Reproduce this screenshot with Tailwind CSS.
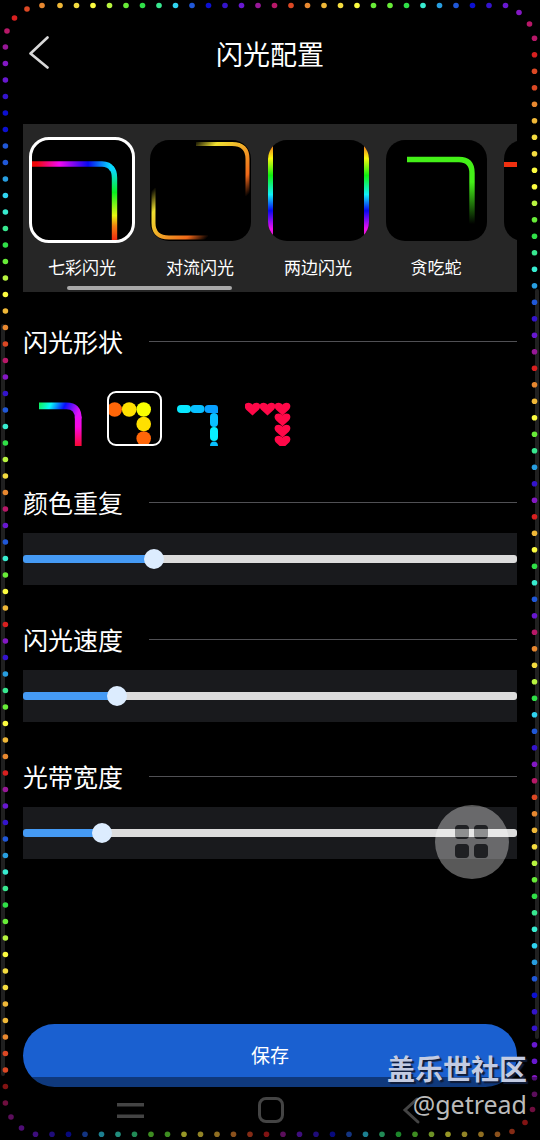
<!DOCTYPE html>
<html lang="zh-CN">
<head>
<meta charset="utf-8">
<meta name="viewport" content="width=device-width, initial-scale=1">
<title>闪光配置</title>
<script src="https://cdn.jsdelivr.net/npm/@tailwindcss/browser@4"></script>
</head>
<body class="bg-black text-white font-['Noto_Sans_CJK_SC',sans-serif]">
<div class="relative flex min-h-screen flex-col overflow-hidden">

  <header class="grid h-[108px] grid-cols-[1fr_auto_1fr] items-center px-6">
    <button type="button" aria-label="返回" class="flex h-10 w-8 items-center">
      <svg class="h-9 w-7" viewBox="0 0 28 36" fill="none" stroke="#d8d8d8" stroke-width="2.6" stroke-linecap="round" stroke-linejoin="round"><path d="M23.5 1.5 6.500 17.500 23.500 31.500"/></svg>
    </button>
    <h1 class="text-[27px] leading-10">闪光配置</h1>
  </header>

  <main class="flex flex-1 flex-col px-[23px] pt-4">
    <section aria-label="闪光模式" class="flex flex-col overflow-hidden bg-[#262626] pt-[13px]">
      <div class="flex">
        <button type="button" aria-pressed="true" class="flex w-[118px] shrink-0 flex-col items-center gap-2.5">
          <span class="flex h-[106px] items-center">
            <span class="block size-[106px] overflow-hidden rounded-[20px] border-[3px] border-white bg-black">
              <svg class="size-full" viewBox="0 0 100 100" fill="none">
                <defs>
                  <linearGradient id="r1" gradientUnits="userSpaceOnUse" x1="0" y1="0" x2="85" y2="0"><stop offset=".05" stop-color="#f00808"/><stop offset=".32" stop-color="#f408f0"/><stop offset=".66" stop-color="#0808f0"/><stop offset=".92" stop-color="#08d8ff"/></linearGradient>
                  <linearGradient id="r2" gradientUnits="userSpaceOnUse" x1="0" y1="30" x2="0" y2="100"><stop offset="0" stop-color="#08d8ff"/><stop offset=".32" stop-color="#08f020"/><stop offset=".65" stop-color="#e8f810"/><stop offset=".8" stop-color="#f08010"/><stop offset="1" stop-color="#f02810"/></linearGradient>
                </defs>
                <path d="M0 24H70Q77 24 80 29" stroke="url(#r1)" stroke-width="5.4"/>
                <path d="M79.4 28Q82.5 31 82.5 38V100" stroke="url(#r2)" stroke-width="5.4"/>
              </svg>
            </span>
          </span>
          <span class="text-[17px] leading-7">七彩闪光</span>
        </button>

        <button type="button" aria-pressed="false" class="flex w-[118px] shrink-0 flex-col items-center gap-2.5">
          <span class="flex h-[106px] items-center">
            <span class="block size-[101px] overflow-hidden rounded-[19px] bg-black">
              <svg class="size-full" viewBox="0 0 101 101" fill="none" stroke-width="4">
                <defs>
                  <linearGradient id="c1" gradientUnits="userSpaceOnUse" x1="46" y1="0" x2="98" y2="55"><stop offset="0" stop-color="#f0e030" stop-opacity="0"/><stop offset=".22" stop-color="#f0e030"/><stop offset=".5" stop-color="#f0a828"/><stop offset=".8" stop-color="#f06818"/><stop offset="1" stop-color="#f06018" stop-opacity="0"/></linearGradient>
                  <linearGradient id="c2" gradientUnits="userSpaceOnUse" x1="4" y1="48" x2="56" y2="99"><stop offset="0" stop-color="#f0e030" stop-opacity="0"/><stop offset=".22" stop-color="#f0e030"/><stop offset=".5" stop-color="#f0a828"/><stop offset=".8" stop-color="#f06818"/><stop offset="1" stop-color="#f06018" stop-opacity="0"/></linearGradient>
                </defs>
                <path d="M46 4H82Q97.500 4 97.500 19V56" stroke="url(#c1)"/>
                <path d="M3.500 48V83Q3.500 97.500 19 97.500H58" stroke="url(#c2)"/>
              </svg>
            </span>
          </span>
          <span class="text-[17px] leading-7">对流闪光</span>
        </button>

        <button type="button" aria-pressed="false" class="flex w-[118px] shrink-0 flex-col items-center gap-2.5">
          <span class="flex h-[106px] items-center">
            <span class="block size-[101px] overflow-hidden rounded-[19px] bg-black">
              <svg class="size-full" viewBox="0 0 101 101">
                <defs><linearGradient id="s1" x1="0" y1="0" x2="0" y2="1"><stop offset=".04" stop-color="#f06820"/><stop offset=".18" stop-color="#f8f810"/><stop offset=".35" stop-color="#10f010"/><stop offset=".54" stop-color="#10f0f8"/><stop offset=".7" stop-color="#0808f0"/><stop offset=".88" stop-color="#f010f0"/><stop offset="1" stop-color="#d020b0"/></linearGradient></defs>
                <path d="M0 0H5V101H0zM96 0H101V101H96z" fill="url(#s1)"/>
              </svg>
            </span>
          </span>
          <span class="text-[17px] leading-7">两边闪光</span>
        </button>

        <button type="button" aria-pressed="false" class="flex w-[118px] shrink-0 flex-col items-center gap-2.5">
          <span class="flex h-[106px] items-center">
            <span class="block size-[101px] overflow-hidden rounded-[19px] bg-black">
              <svg class="size-full" viewBox="0 0 101 101" fill="none">
                <defs><linearGradient id="n1" gradientUnits="userSpaceOnUse" x1="0" y1="42" x2="0" y2="84"><stop offset="0" stop-color="#44f018"/><stop offset="1" stop-color="#44f018" stop-opacity="0"/></linearGradient></defs>
                <path d="M21 19.500H73Q86 19.500 86 33V84" stroke="url(#n1)" stroke-width="5.400"/>
              </svg>
            </span>
          </span>
          <span class="text-[17px] leading-7">贪吃蛇</span>
        </button>

        <button type="button" aria-label="更多模式" class="flex w-[118px] shrink-0 flex-col items-center">
          <span class="flex h-[106px] items-center">
            <span class="block size-[101px] overflow-hidden rounded-[19px] bg-black">
              <svg class="size-full" viewBox="0 0 101 101"><path d="M0 22H80V27H0z" fill="#f03010"/></svg>
            </span>
          </span>
        </button>
      </div>
      <div class="mb-0.5 ml-11 mt-[5px] h-1 w-[165px] rounded-full bg-[#a9a9a9]"></div>
    </section>

    <section class="pt-[31px]">
      <div class="flex items-center gap-[26px]"><h2 class="text-[25px] leading-9">闪光形状</h2><div class="h-px flex-1 bg-[#505054]"></div></div>
      <div class="flex gap-3.5 pl-[15px] pt-8">
        <button type="button" aria-label="线条" aria-pressed="false" class="size-[55px]">
          <svg class="size-full" viewBox="0 0 54 54" fill="none" stroke-width="6.600">
            <defs>
              <linearGradient id="l1" gradientUnits="userSpaceOnUse" x1="1" y1="0" x2="41" y2="18"><stop offset="0" stop-color="#10f010"/><stop offset=".36" stop-color="#08f8f8"/><stop offset=".66" stop-color="#0810f8"/><stop offset="1" stop-color="#e010f8"/></linearGradient>
              <linearGradient id="l2" gradientUnits="userSpaceOnUse" x1="0" y1="22" x2="0" y2="55"><stop offset="0" stop-color="#e010f8"/><stop offset=".4" stop-color="#f808e0"/><stop offset="1" stop-color="#f80828"/></linearGradient>
            </defs>
            <path d="M1 14.500H28Q39.500 14.500 39.500 27" stroke="url(#l1)"/><path d="M39.500 25V55" stroke="url(#l2)"/>
          </svg>
        </button>
        <button type="button" aria-label="圆点" aria-pressed="true" class="size-[55px] overflow-hidden rounded-[9px] border-2 border-white">
          <svg class="size-full" viewBox="0 0 51 51"><g fill="#ff6608"><circle cx="5.700" cy="16.500" r="7.300"/><circle cx="34.700" cy="45.500" r="7.300"/></g><g fill="#ffe000"><circle cx="20.200" cy="16.500" r="7.300"/><circle cx="34.700" cy="31" r="7.300"/></g><circle cx="34.700" cy="16.500" r="7.300" fill="#f8ff00"/></svg>
        </button>
        <button type="button" aria-label="胶囊" aria-pressed="false" class="size-[55px]">
          <svg class="size-full" viewBox="0 0 55 55"><rect x="1" y="14" width="14" height="8" rx="4" fill="#08e8ff"/><rect x="14.500" y="14" width="14" height="8" rx="4" fill="#08c0ff"/><path d="M32.500 14H39Q42 14 42 17V22H32.500a4 4 0 0 1 0-8z" fill="#08a0ff"/><rect x="34" y="22" width="8" height="14" rx="4" fill="#08c0ff"/><rect x="34" y="36" width="8" height="14" rx="4" fill="#08f0ff"/><path d="M34 55Q34 50.500 38 50.500T42 55z" fill="#08c0ff"/></svg>
        </button>
        <button type="button" aria-label="爱心" aria-pressed="false" class="size-[55px]">
          <svg class="size-full" viewBox="0 0 55 55" fill="#ff0848">
            <defs><path id="heart" d="M7.500 12.800 1.200 7C-1.800 3.500-.2 0 3.500 0 5.500 0 7 1 7.500 2 8 1 9.500 0 11.500 0c3.700 0 5.300 3.500 2.300 7z"/></defs>
            <use href="#heart" x="0" y="11.700"/><use href="#heart" x="15" y="11.700"/><use href="#heart" x="30" y="11.700"/><use href="#heart" x="30" y="22.500"/><use href="#heart" x="30" y="33.700"/><use href="#heart" x="30" y="44.800"/>
          </svg>
        </button>
      </div>
    </section>

    <section class="pt-[38px]">
      <div class="flex items-center gap-[26px]"><h2 class="text-[25px] leading-9"><label for="repeat">颜色重复</label></h2><div class="h-px flex-1 bg-[#505054]"></div></div>
      <div class="mt-[13px] flex h-[52px] items-center bg-[#191a1d]">
        <input id="repeat" type="range" min="0" max="1000" value="255" style="background-image:linear-gradient(to right,#459af4 26.5%,#dcdcdc 26.5%)" class="h-2 w-full appearance-none rounded-[3px] [&::-webkit-slider-thumb]:size-5 [&::-webkit-slider-thumb]:appearance-none [&::-webkit-slider-thumb]:rounded-full [&::-webkit-slider-thumb]:bg-[#dcecfe]">
      </div>
    </section>

    <section class="pt-9">
      <div class="flex items-center gap-[26px]"><h2 class="text-[25px] leading-9"><label for="speed">闪光速度</label></h2><div class="h-px flex-1 bg-[#505054]"></div></div>
      <div class="mt-[13px] flex h-[52px] items-center bg-[#191a1d]">
        <input id="speed" type="range" min="0" max="1000" value="177" style="background-image:linear-gradient(to right,#459af4 19%,#dcdcdc 19%)" class="h-2 w-full appearance-none rounded-[3px] [&::-webkit-slider-thumb]:size-5 [&::-webkit-slider-thumb]:appearance-none [&::-webkit-slider-thumb]:rounded-full [&::-webkit-slider-thumb]:bg-[#dcecfe]">
      </div>
    </section>

    <section class="pt-9">
      <div class="flex items-center gap-[26px]"><h2 class="text-[25px] leading-9"><label for="band">光带宽度</label></h2><div class="h-px flex-1 bg-[#505054]"></div></div>
      <div class="mt-[13px] flex h-[52px] items-center bg-[#191a1d]">
        <input id="band" type="range" min="0" max="1000" value="146" style="background-image:linear-gradient(to right,#459af4 16%,#dcdcdc 16%)" class="h-2 w-full appearance-none rounded-[3px] [&::-webkit-slider-thumb]:size-5 [&::-webkit-slider-thumb]:appearance-none [&::-webkit-slider-thumb]:rounded-full [&::-webkit-slider-thumb]:bg-[#dcecfe]">
      </div>
    </section>

    <button type="button" class="mb-[53px] mt-auto h-[63px] rounded-full bg-[#1a60d0] text-[19px]">保存</button>
  </main>

  <!-- Light strip that runs round the screen edge, with the two edge handles -->
  <svg id="strip" aria-hidden="true" class="pointer-events-none absolute inset-0 size-full" viewBox="0 0 540 1140" preserveAspectRatio="none">
    <rect x="1" y="324" width="4" height="752" rx="2" fill="#202020"/>
    <rect x="535" y="289" width="4" height="750" rx="2" fill="#202020"/>
  </svg>

  <button type="button" aria-label="悬浮菜单" class="absolute right-[31px] top-[805px] size-[74px]">
    <svg class="size-full" viewBox="0 0 74 74"><path fill="#fff" fill-opacity=".35" fill-rule="evenodd" d="M37 0a37 37 0 1 1 0 74 37 37 0 1 1 0-74zM24 20a4 4 0 0 0-4 4v6a4 4 0 0 0 4 4h6a4 4 0 0 0 4-4v-6a4 4 0 0 0-4-4zM43 20a4 4 0 0 0-4 4v6a4 4 0 0 0 4 4h6a4 4 0 0 0 4-4v-6a4 4 0 0 0-4-4zM24 39a4 4 0 0 0-4 4v6a4 4 0 0 0 4 4h6a4 4 0 0 0 4-4v-6a4 4 0 0 0-4-4zM43 39a4 4 0 0 0-4 4v6a4 4 0 0 0 4 4h6a4 4 0 0 0 4-4v-6a4 4 0 0 0-4-4z"/><g fill="#282a2c" fill-opacity=".43"><rect x="20" y="20" width="14" height="14" rx="4"/><rect x="39" y="20" width="14" height="14" rx="4"/><rect x="20" y="39" width="14" height="14" rx="4"/><rect x="39" y="39" width="14" height="14" rx="4"/></g></svg>
  </button>

  <nav aria-label="系统导航" class="absolute inset-x-0 bottom-0 flex h-[63px] items-center justify-between bg-black/40 pl-[115px] pr-[113px]">
    <button type="button" aria-label="最近任务"><svg class="h-8 w-8" viewBox="0 0 32 32" fill="#444"><path d="M2 10h27v3.500H2zM2 21.500h27V25H2z"/></svg></button>
    <button type="button" aria-label="主屏幕"><svg class="h-8 w-8" viewBox="0 0 32 32" fill="none" stroke="#444" stroke-width="3"><rect x="4.500" y="5.500" width="23" height="23" rx="6.500"/></svg></button>
    <button type="button" aria-label="返回上一页"><svg class="h-8 w-8" viewBox="0 0 32 32" fill="none" stroke="#444" stroke-width="3" stroke-linecap="round"><path d="M22 6 10 17l13 12"/></svg></button>
  </nav>

  <div class="absolute bottom-[18px] right-[13px] flex flex-col items-end text-right">
    <p class="text-[28px] font-bold leading-9 text-[#c3cbe2] [text-shadow:2px_2px_1px_#101c38]">盖乐世社区</p>
    <p class="font-['Noto_Sans',sans-serif] text-[25px] leading-9 text-[#bbbbbb]">@getread</p>
  </div>
</div>

<script>
  // Each letter is the colour of one lamp in a run; runs are spaced evenly.
  const hue = { r:'#d82020', o:'#dc4824', O:'#e88830', g:'#f0b838', y:'#f4dc40', Y:'#fcfc40', l:'#b8f440', L:'#68ec38', G:'#30e048', t:'#38e890', c:'#38ecd0', C:'#30d4f0', a:'#289ee0', b:'#2058d8', B:'#0c10d0', i:'#3414cc', v:'#6818d0', p:'#8418c4', m:'#981898', M:'#b81868' };
  const strip = document.getElementById('strip');
  function lamp(x, y, key) {
    const c = document.createElementNS('http://www.w3.org/2000/svg', 'circle');
    c.setAttribute('cx', x); c.setAttribute('cy', y); c.setAttribute('r', 2.8); c.setAttribute('fill', hue[key]);
    strip.appendChild(c);
  }
  function run(x, y, dx, dy, keys) { [...keys].forEach((k, n) => lamp(x + dx * n, y + dy * n, k)); }
  run(60, 5.5, 16.5, 0, 'gyYlLGtCbBivmMoOgyYLLGcabBiv');
  run(5.4, 47, 0, 16.5, 'mpviBBbbaCctGLlYgOoMpibcGlyOMvbcLYgrpiatLYgOrmvibactGLlYyyggOoorM');
  run(534.5, 38.3, 0, 16.5, 'MrooOgyyYYlLGtcabivmrOgYLtaiprgYGcbvMOylGCbipMoOgylLGtcCabBiivvpm');
  run(35.5, 1134.3, 16.5, 0, 'viBbCctLLYygOormviBbCtGLlYygO');
  [[42,5.5,'O'],[27,9,'o'],[14.5,18,'r'],[7,31,'M'],[519,12.5,'p'],[529.5,24,'M'],[11,1117,'m'],[21.5,1128,'p'],[532.5,1109.5,'M'],[525,1122.5,'r'],[512,1131.5,'o']].forEach(d => lamp(...d));
</script>
</body>
</html>
